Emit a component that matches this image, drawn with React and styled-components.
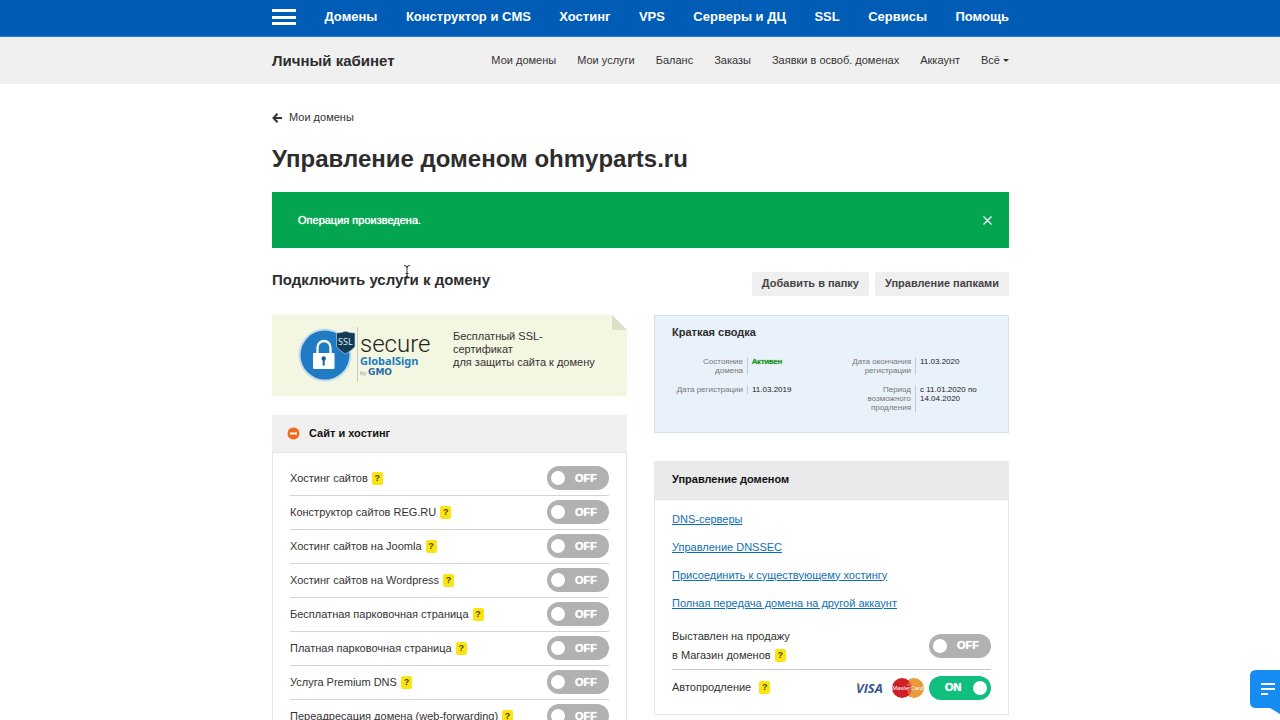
import { useId, useState } from "react";
import styled, { createGlobalStyle } from "styled-components";

const GlobalStyle = createGlobalStyle`
  *, *::before, *::after {
    box-sizing: border-box;
  }
  body {
    margin: 0;
    background: #fff;
    color: #333;
    font-family: "Liberation Sans", Arial, sans-serif;
    font-size: 11px;
    line-height: 13px;
  }
  button, input {
    font: inherit;
  }
`;

const Container = styled.div`
  max-width: 740px;
  margin: 0 auto;
  padding: 0 1px 0 2px;
`;

const TopBar = styled.header`
  background: #005cb5;
  border-bottom: 1px solid #2f7cc6;
`;

const TopNav = styled(Container).attrs({ as: "nav" })`
  display: flex;
  align-items: center;
  justify-content: space-between;
  height: 36px;
  padding-bottom: 2px;
`;

const TopLink = styled.a`
  color: #fff;
  font-size: 13px;
  font-weight: 700;
  line-height: 16px;
  text-decoration: none;
  white-space: nowrap;
`;

const MenuButton = styled.button`
  display: flex;
  flex-direction: column;
  justify-content: space-between;
  width: 24px;
  height: 16px;
  padding: 0;
  border: 0;
  background: none;

  span {
    height: 3px;
    background: #fff;
  }
`;

const SubBar = styled.div`
  background: #f0f0f0;
`;

const SubBarInner = styled(Container)`
  display: flex;
  align-items: center;
  justify-content: space-between;
  height: 47px;
`;

const CabinetTitle = styled.div`
  color: #2d2d2d;
  font-size: 15px;
  font-weight: 700;
  line-height: 20px;
`;

const SubNav = styled.nav`
  display: flex;
  align-items: center;
  gap: 21px;
`;

const SubLink = styled.a`
  display: flex;
  align-items: center;
  gap: 3px;
  color: #333;
  text-decoration: none;
  white-space: nowrap;
`;

const Caret = styled.span`
  border: 3px solid transparent;
  border-top-color: #333;
  border-bottom: 0;
`;

const BackLink = styled.a`
  display: inline-flex;
  align-items: center;
  gap: 7px;
  margin-top: 27px;
  color: #333;
  text-decoration: none;
`;

const PageTitle = styled.h1`
  margin: 18px 0;
  color: #2d2d2d;
  font-size: 24px;
  font-weight: 700;
  line-height: 30px;
`;

const Alert = styled.div`
  display: flex;
  align-items: center;
  justify-content: space-between;
  height: 56px;
  padding: 2px 16px 0 26px;
  background: #04a550;
  color: #fff;
  text-shadow: 0 0 1px #fff;
`;

const CloseButton = styled.button`
  display: flex;
  padding: 0;
  border: 0;
  background: none;
`;

const SectionHead = styled.div`
  display: flex;
  align-items: flex-start;
  justify-content: space-between;
  margin: 24px 0 19px;
`;

const SectionTitle = styled.h2`
  position: relative;
  margin: 0;
  color: #2d2d2d;
  font-size: 15px;
  font-weight: 700;
  line-height: 16px;
`;

const TextCursor = styled.svg`
  position: absolute;
  top: -8px;
  left: 131px;
`;

const FolderActions = styled.div`
  display: flex;
  gap: 6px;
`;

const FolderButton = styled.button`
  height: 24px;
  padding: 0 10px;
  border: 0;
  border-radius: 2px;
  background: #efefef;
  color: #444;
  font-weight: 700;
  white-space: nowrap;
`;

const Columns = styled.div`
  display: grid;
  grid-template-columns: 1fr 1fr;
  align-items: start;
  gap: 27px;
`;

const Column = styled.div`
  display: flex;
  flex-direction: column;
  gap: ${({ $gap }) => $gap}px;
`;

const Banner = styled.a`
  position: relative;
  display: flex;
  align-items: flex-start;
  gap: 15px;
  height: 81px;
  padding: 12px 24px 0 26px;
  background: #f3f6e0;
  color: #333;
  text-decoration: none;

  p {
    margin: 3px 0 0;
    white-space: nowrap;
  }
`;

const Fold = styled.svg`
  position: absolute;
  top: 0;
  right: 0;
`;

const Summary = styled.section`
  height: 118px;
  padding: 10px 0 0 17px;
  border: 1px solid #d5e1ec;
  background: #e9f1fa;

  h3 {
    margin: 0 0 18px;
    color: #2d2d2d;
    font-size: 11px;
    line-height: 13px;
  }
`;

const Facts = styled.dl`
  display: grid;
  grid-template-columns: 1fr 1fr;
  align-items: start;
  row-gap: 10px;
  margin: 0;
  font-size: 8px;
  line-height: 9px;
`;

const Fact = styled.div`
  display: flex;

  dt {
    width: 76px;
    padding: 0 4px 0 3px;
    border-right: 1px solid #c3cad1;
    color: #777;
    text-align: right;
  }
  dd {
    flex: 1;
    margin: 0;
    padding: 0 24px 0 4px;
    color: ${({ $active }) => ($active ? "#0a8a0a" : "#222")};
    text-shadow: ${({ $active }) => ($active ? "0 0 1px #0a8a0a" : "none")};
  }
`;

const Panel = styled.section`
  border: 1px solid #e6e6e6;
`;

const PanelHead = styled.h3`
  display: flex;
  align-items: center;
  gap: 9px;
  height: ${({ $dark }) => ($dark ? 39 : 38)}px;
  margin: -1px -1px 0;
  padding: 0 ${({ $dark }) => ($dark ? 18 : 15)}px;
  border-bottom: 1px solid #e2e2e2;
  background: ${({ $dark }) => ($dark ? "#eaeaea" : "#f0f0f0")};
  color: #111;
  font-size: 11px;
  font-weight: 700;
`;

const ServiceList = styled.ul`
  margin: 0;
  padding: 9px 17px;
  list-style: none;
`;

const ServiceRow = styled.li`
  display: flex;
  align-items: center;
  justify-content: space-between;
  height: 34px;
  border-bottom: 1px solid #d4d4d4;
`;

const ServiceName = styled.div`
  display: flex;
  align-items: center;
  gap: ${({ $wide }) => ($wide ? 8 : 4)}px;
  white-space: nowrap;
`;

const Hint = styled.button`
  width: 11px;
  height: 13px;
  padding: 0;
  border: 0;
  border-radius: 2px;
  background: #fbe413;
  color: #4a4300;
  font-size: 9px;
  font-weight: 700;
  line-height: 13px;
  text-align: center;
`;

const Toggle = styled.label`
  display: flex;
  align-items: center;
  justify-content: space-between;
  flex-direction: ${({ $on }) => ($on ? "row-reverse" : "row")};
  width: 62px;
  height: 24px;
  padding: ${({ $on }) => ($on ? "0 4px 0 16px" : "0 12px 0 4px")};
  border-radius: 12px;
  background: ${({ $on }) => ($on ? "#10bf7e" : "#b1b1b1")};
  color: #fff;
  font-weight: 700;
  text-shadow: 0 0 1px #fff;
  cursor: pointer;

  input {
    appearance: none;
    width: 14px;
    height: 14px;
    margin: 0;
    border-radius: 50%;
    background: #fff;
    cursor: pointer;
  }
`;

const LinkList = styled.ul`
  margin: 0;
  padding: 5px 17px 0;
  list-style: none;
`;

const LinkItem = styled.li`
  height: 28px;
  line-height: 28px;

  a {
    color: #0f6fb3;
  }
`;

const SaleRow = styled.div`
  display: flex;
  align-items: center;
  justify-content: space-between;
  margin: 0 17px;
  padding: 10px 0 4px;
  border-bottom: 1px solid #c8c8c8;
  line-height: 19px;
`;

const RenewRow = styled.div`
  display: flex;
  align-items: center;
  justify-content: space-between;
  height: 36px;
  margin: 0 17px 8px;
`;

const PaymentSide = styled.div`
  display: flex;
  align-items: center;
  gap: 5px;
`;

const ChatButton = styled.button`
  position: fixed;
  right: 0;
  bottom: 0;
  display: flex;
  padding: 0;
  border: 0;
  background: none;
`;

const topLinks = [
  "Домены",
  "Конструктор и CMS",
  "Хостинг",
  "VPS",
  "Серверы и ДЦ",
  "SSL",
  "Сервисы",
  "Помощь",
];

const subLinks = [
  "Мои домены",
  "Мои услуги",
  "Баланс",
  "Заказы",
  "Заявки в освоб. доменах",
  "Аккаунт",
];

const services = [
  "Хостинг сайтов",
  "Конструктор сайтов REG.RU",
  "Хостинг сайтов на Joomla",
  "Хостинг сайтов на Wordpress",
  "Бесплатная парковочная страница",
  "Платная парковочная страница",
  "Услуга Premium DNS",
  "Переадресация домена (web-forwarding)",
];

const facts = [
  { label: "Состояние домена", value: "Активен", active: true },
  { label: "Дата окончания регистрации", value: "11.03.2020" },
  { label: "Дата регистрации", value: "11.03.2019" },
  { label: "Период возможного продления", value: "с 11.01.2020 по 14.04.2020" },
];

const domainLinks = [
  "DNS-серверы",
  "Управление DNSSEC",
  "Присоединить к существующему хостингу",
  "Полная передача домена на другой аккаунт",
];

const SecureLogo = () => (
  <svg width="140" height="60" viewBox="0 0 140 60" role="img" aria-label="SSL secure GlobalSign by GMO">
    <circle cx="27" cy="28" r="26.500" fill="#c5ddec" />
    <circle cx="27" cy="28" r="24.500" fill="#217bc4" />
    <path d="M19.500 27v-6.500a6.500 6.500 0 0 1 13 0V27" fill="none" stroke="#f3f6e0" strokeWidth="2.400" />
    <rect x="15" y="26" width="21.500" height="16" rx="1" fill="#fff" />
    <circle cx="25.700" cy="31.500" r="2.200" fill="#1a5f9e" />
    <path d="M24.700 32h2v6.500h-2z" fill="#1a5f9e" />
    <path d="M38.500 6q5-.3 9-1.800q4.500 1.600 9.500 1.800v13.500q-1.500 2.500-9.500 7.500q-7.500-4.500-9-7.500z" fill="#123c55" stroke="#c5ddec" strokeWidth="0.600" />
    <text x="40" y="18" fill="#dcecf5" fontFamily="Noto Sans, sans-serif" fontSize="9">SSL</text>
    <path d="M59.500 0v55" stroke="#c9cdbf" />
    <text x="62" y="25" fill="#222" fontFamily="Roboto, sans-serif" fontSize="24" fontWeight="300">secure</text>
    <text x="62" y="38" fill="#217bc4" fontFamily="Noto Sans, sans-serif" fontSize="11" fontWeight="700">GlobalSign</text>
    <text x="62" y="48" fill="#8c9aa5" fontFamily="Liberation Sans, sans-serif" fontSize="6">by</text>
    <text x="70" y="48" fill="#2b6da3" fontFamily="DejaVu Sans, sans-serif" fontSize="9" fontWeight="700">GMO</text>
  </svg>
);

const VisaLogo = () => (
  <svg width="32" height="20" viewBox="0 0 32 20" role="img" aria-label="Visa">
    <text x="1" y="15" fill="#3a569b" fontFamily="Open Sans, sans-serif" fontSize="13" fontWeight="700" fontStyle="italic">VISA</text>
    <path d="M1 5h3l1 4q-1-3-4-4z" fill="#e9a43a" />
  </svg>
);

const MasterCardLogo = () => (
  <svg width="32" height="20" viewBox="0 0 32 20" role="img" aria-label="MasterCard">
    <circle cx="22" cy="10" r="10" fill="#e89a3c" />
    <circle cx="10" cy="10" r="10" fill="#cf2027" />
    <path d="M16 5h5M15 7h5M15 13h5M16 15h4" stroke="#e89a3c" />
    <text x="0" y="12" fill="#fff" fontFamily="Liberation Sans, sans-serif" fontSize="6" fontStyle="italic">MasterCard</text>
  </svg>
);

const Switch = ({ label, defaultOn = false }) => {
  const id = useId();
  const [on, setOn] = useState(defaultOn);

  return (
    <Toggle htmlFor={id} $on={on}>
      <input
        id={id}
        type="checkbox"
        role="switch"
        aria-label={label}
        checked={on}
        onChange={() => setOn(!on)}
      />
      <span>{on ? "ON" : "OFF"}</span>
    </Toggle>
  );
};

const App = () => {
  const [showAlert, setShowAlert] = useState(true);

  return (
    <>
      <GlobalStyle />
      <TopBar>
        <TopNav>
          <MenuButton aria-label="Меню">
            <span />
            <span />
            <span />
          </MenuButton>
          {topLinks.map((text) => (
            <TopLink href="#" key={text}>{text}</TopLink>
          ))}
        </TopNav>
      </TopBar>
      <SubBar>
        <SubBarInner>
          <CabinetTitle>Личный кабинет</CabinetTitle>
          <SubNav>
            {subLinks.map((text) => (
              <SubLink href="#" key={text}>{text}</SubLink>
            ))}
            <SubLink href="#">
              Всё
              <Caret />
            </SubLink>
          </SubNav>
        </SubBarInner>
      </SubBar>

      <Container as="main">
        <BackLink href="#">
          <svg width="10" height="10" viewBox="0 0 10 10" fill="none" stroke="#333" strokeWidth="2">
            <path d="M5.500 0.800L1.500 5l4 4.200M1.500 5H10" />
          </svg>
          Мои домены
        </BackLink>
        <PageTitle>Управление доменом ohmyparts.ru</PageTitle>

        {showAlert && (
          <Alert role="status">
            Операция произведена.
            <CloseButton aria-label="Закрыть" onClick={() => setShowAlert(false)}>
              <svg width="11" height="11" viewBox="0 0 11 11" stroke="#fff" strokeWidth="1.200">
                <path d="M1.500 1.500l8 8M9.500 1.500l-8 8" />
              </svg>
            </CloseButton>
          </Alert>
        )}

        <SectionHead>
          <SectionTitle>
            Подключить услуги к домену
            <TextCursor width="8" height="15" viewBox="0 0 8 15" fill="none" stroke="#333">
              <path d="M1 1.500q3 0 3 2q0-2 3-2M4 3v9M1 13.500q3 0 3-2q0 2 3 2M2.500 9.500h3" />
            </TextCursor>
          </SectionTitle>
          <FolderActions>
            <FolderButton>Добавить в папку</FolderButton>
            <FolderButton>Управление папками</FolderButton>
          </FolderActions>
        </SectionHead>

        <Columns>
          <Column $gap={19}>
            <Banner href="#">
              <SecureLogo />
              <p>
                Бесплатный SSL-
                <br />
                сертификат
                <br />
                для защиты сайта к домену
              </p>
              <Fold width="15" height="15" viewBox="0 0 15 15">
                <path d="M0 0h15v15z" fill="#fff" />
                <path d="M0 0v15h15z" fill="#dcdfcb" />
              </Fold>
            </Banner>

            <Panel>
              <PanelHead>
                <svg width="13" height="13" viewBox="0 0 13 13">
                  <circle cx="6.500" cy="6.500" r="6" fill="#f26a1b" />
                  <path d="M3 6.500h7" stroke="#fff" strokeWidth="2" />
                </svg>
                Сайт и хостинг
              </PanelHead>
              <ServiceList>
                {services.map((name) => (
                  <ServiceRow key={name}>
                    <ServiceName>
                      {name}
                      <Hint>?</Hint>
                    </ServiceName>
                    <Switch label={name} />
                  </ServiceRow>
                ))}
              </ServiceList>
            </Panel>
          </Column>

          <Column $gap={28}>
            <Summary>
              <h3>Краткая сводка</h3>
              <Facts>
                {facts.map(({ label, value, active }) => (
                  <Fact key={label} $active={active}>
                    <dt>{label}</dt>
                    <dd>{value}</dd>
                  </Fact>
                ))}
              </Facts>
            </Summary>

            <Panel>
              <PanelHead $dark>Управление доменом</PanelHead>
              <LinkList>
                {domainLinks.map((text) => (
                  <LinkItem key={text}>
                    <a href="#">{text}</a>
                  </LinkItem>
                ))}
              </LinkList>
              <SaleRow>
                <div>
                  Выставлен на продажу
                  <ServiceName>
                    в Магазин доменов
                    <Hint>?</Hint>
                  </ServiceName>
                </div>
                <Switch label="Выставлен на продажу в Магазин доменов" />
              </SaleRow>
              <RenewRow>
                <ServiceName $wide>
                  Автопродление
                  <Hint>?</Hint>
                </ServiceName>
                <PaymentSide>
                  <VisaLogo />
                  <MasterCardLogo />
                  <Switch label="Автопродление" defaultOn />
                </PaymentSide>
              </RenewRow>
            </Panel>
          </Column>
        </Columns>
      </Container>

      <ChatButton aria-label="Чат">
        <svg width="34" height="54" viewBox="0 0 34 54">
          <path d="M10 4h24v44l-10-6H10q-6 0-6-6V10q0-6 6-6z" fill="#168cf3" />
          <path d="M15 18h14M15 23h14M15 28h7" stroke="#fff" strokeWidth="2" />
        </svg>
      </ChatButton>
    </>
  );
};

export default App;
